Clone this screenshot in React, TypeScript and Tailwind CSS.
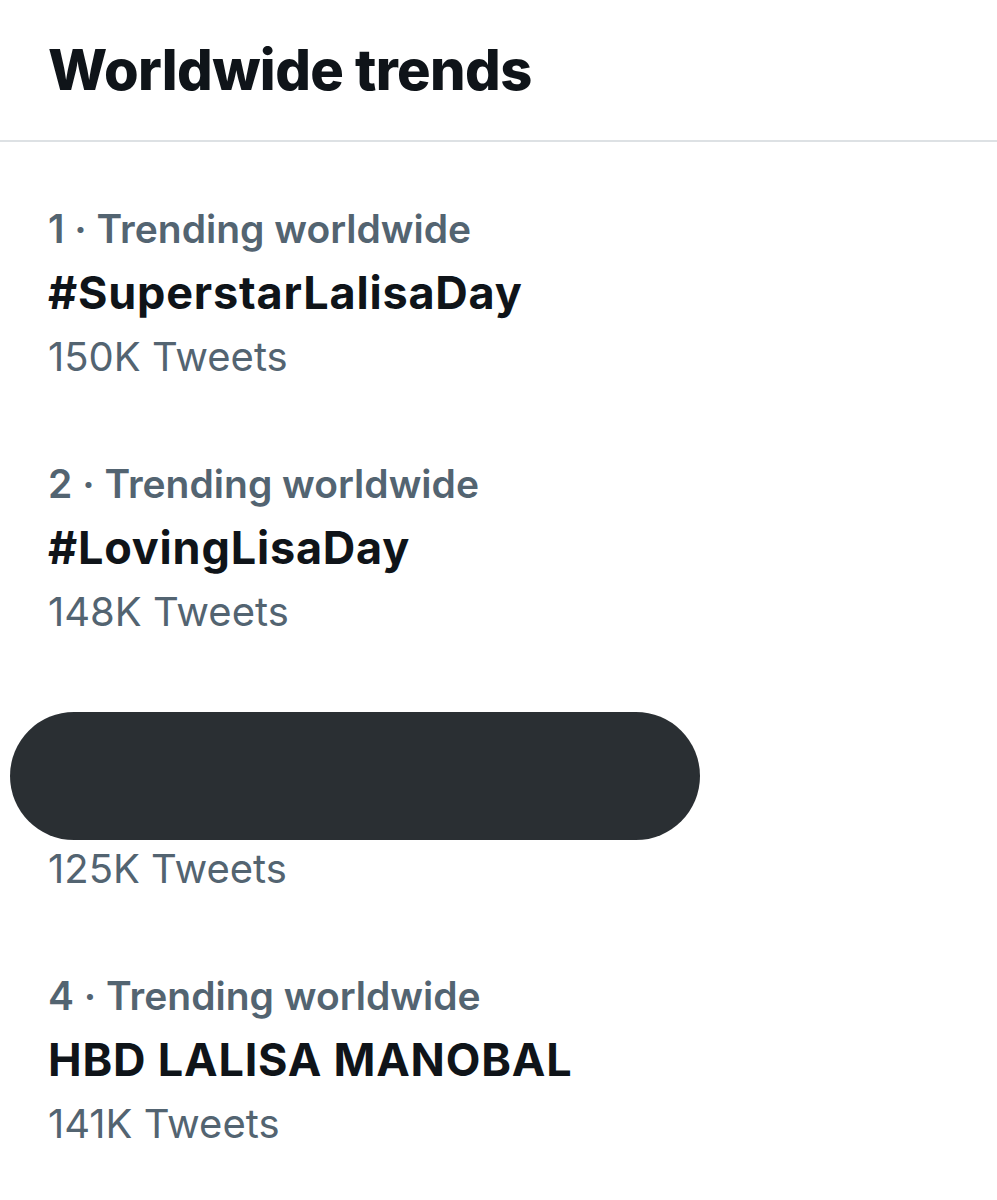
const trends = [
  { rank: 1, name: "#SuperstarLalisaDay", count: "150K Tweets" },
  { rank: 2, name: "#LovingLisaDay", count: "148K Tweets" },
  { rank: 3, name: null, count: "125K Tweets" },
  { rank: 4, name: "HBD LALISA MANOBAL", count: "141K Tweets" },
];

export default function App() {
  return (
    <div className="w-[997px] h-[1200px] bg-white text-[#0f1419] overflow-hidden" style={{ fontFamily: "Inter, 'Liberation Sans', sans-serif" }}>
      <div className="h-[142px] border-b-2 border-[#dde1e4] pl-[48px] flex items-center">
        <h1 className="text-[56px] font-extrabold tracking-[-0.6px] leading-none">Worldwide trends</h1>
      </div>

      <div className="flex flex-col gap-[63px] pt-[55px] pl-[48px]">
        {trends.map(t => (
          <div key={t.rank} className="flex flex-col">
            {t.name ? (
              <>
                <div className="h-[64px] flex items-center text-[39px] font-semibold text-[#536471]">
                  {t.rank} · Trending worldwide
                </div>
                <div className="h-[64px] flex items-center text-[45px] font-bold tracking-[0.8px]">{t.name}</div>
              </>
            ) : (
              <div className="-ml-[38px] mt-[5px] mb-[-3px] h-[128px] w-[690px] rounded-full bg-[#2a2f33]" />
            )}
            <div className="h-[64px] flex items-center text-[40px] text-[#536471]">{t.count}</div>
          </div>
        ))}
      </div>
    </div>
  );
}
